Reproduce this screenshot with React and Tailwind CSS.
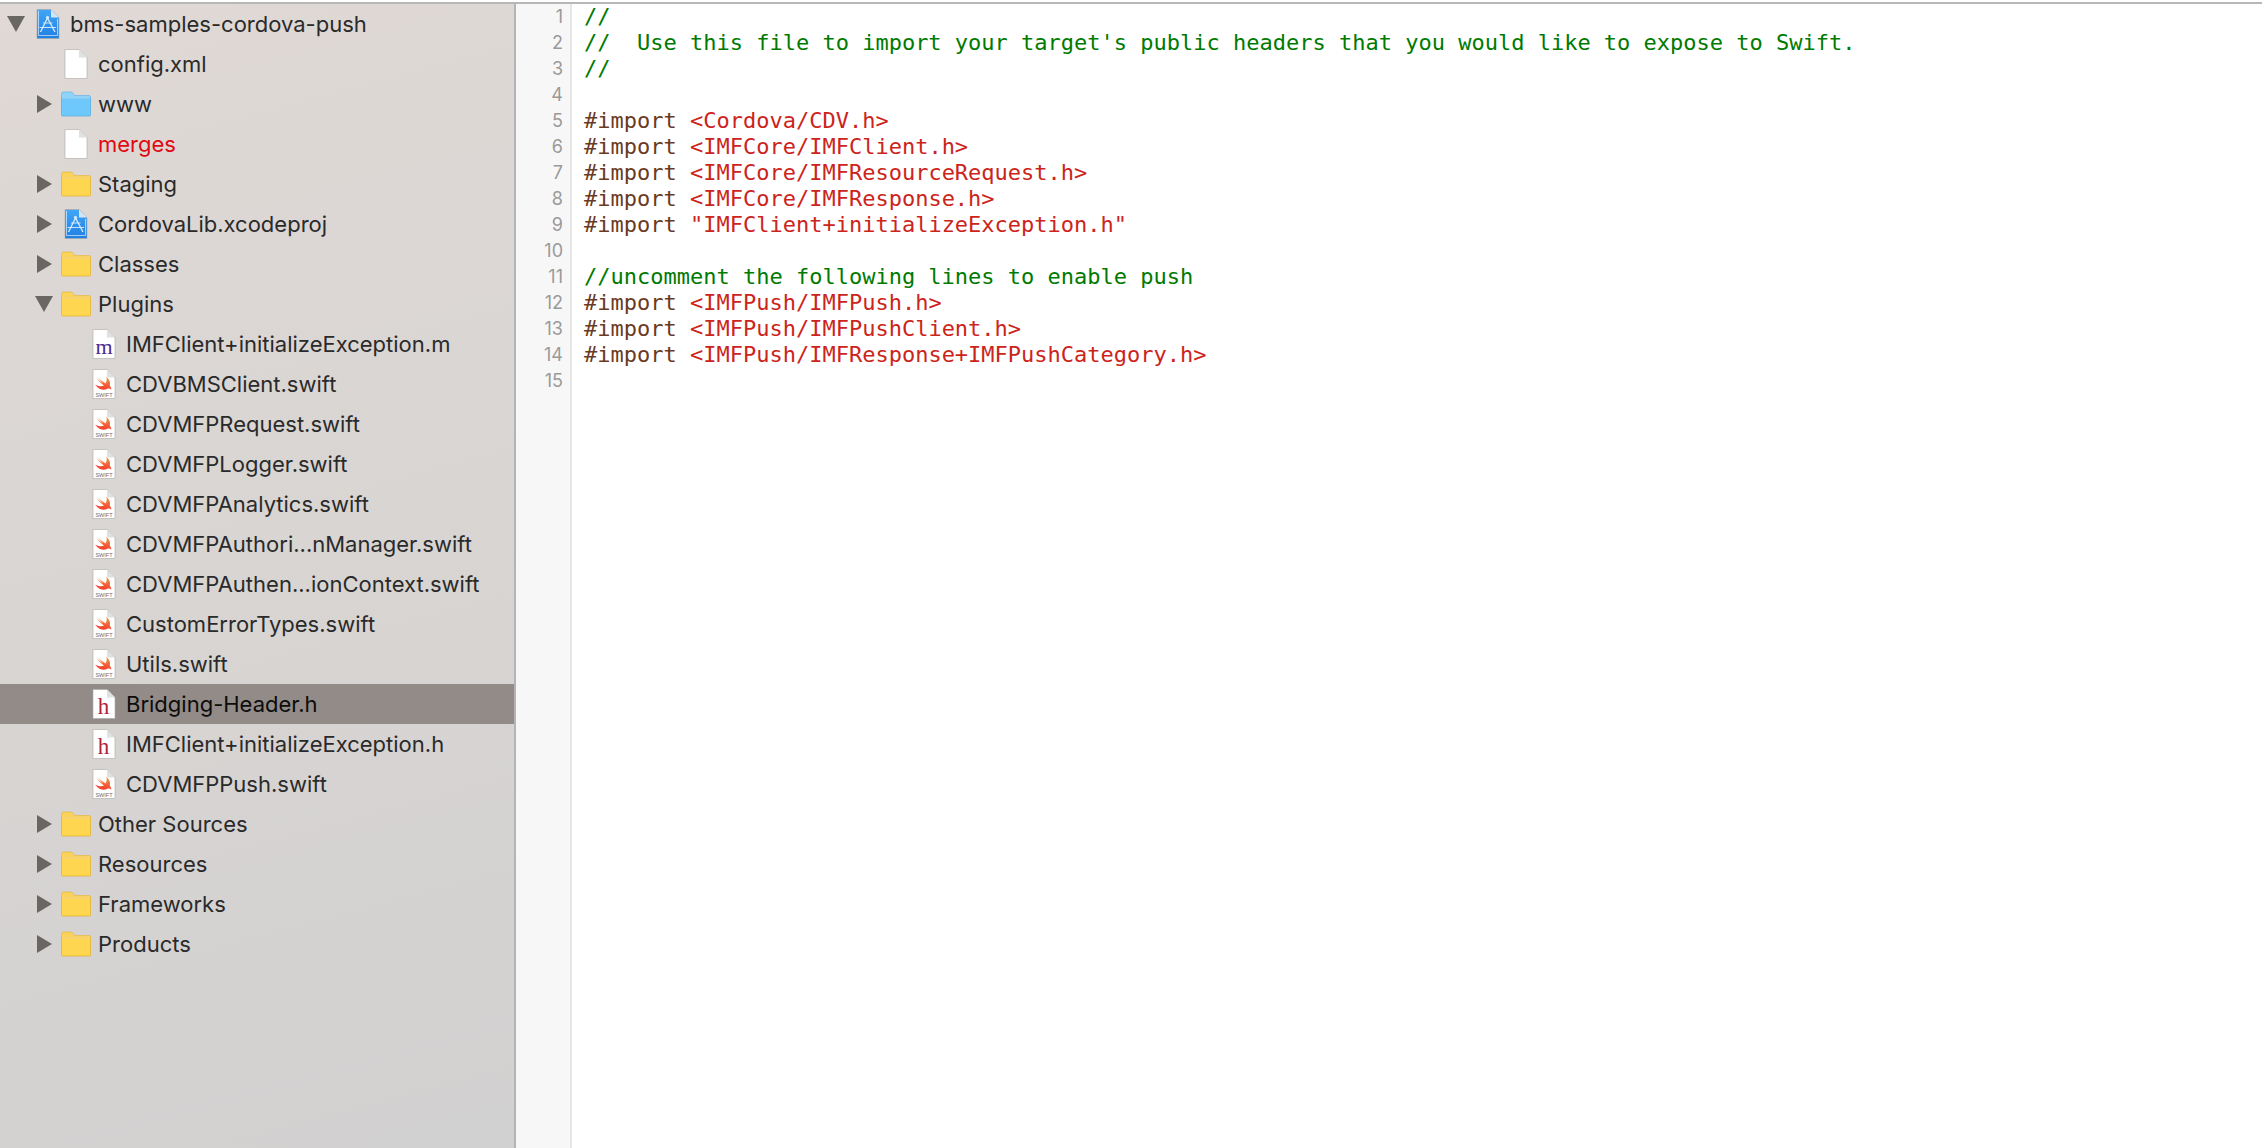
// Sidebar tree: level sets the indent, arrow is "open", "closed" or nothing
const tree = [
  { level: 0, arrow: "open", icon: "project", name: "bms-samples-cordova-push" },
  { level: 1, icon: "doc", name: "config.xml" },
  { level: 1, arrow: "closed", icon: "blueFolder", name: "www" },
  { level: 1, icon: "doc", name: "merges", red: true },
  { level: 1, arrow: "closed", icon: "folder", name: "Staging" },
  { level: 1, arrow: "closed", icon: "project", name: "CordovaLib.xcodeproj" },
  { level: 1, arrow: "closed", icon: "folder", name: "Classes" },
  { level: 1, arrow: "open", icon: "folder", name: "Plugins" },
  { level: 2, icon: "m", name: "IMFClient+initializeException.m" },
  { level: 2, icon: "swift", name: "CDVBMSClient.swift" },
  { level: 2, icon: "swift", name: "CDVMFPRequest.swift" },
  { level: 2, icon: "swift", name: "CDVMFPLogger.swift" },
  { level: 2, icon: "swift", name: "CDVMFPAnalytics.swift" },
  { level: 2, icon: "swift", name: "CDVMFPAuthori...nManager.swift" },
  { level: 2, icon: "swift", name: "CDVMFPAuthen...ionContext.swift" },
  { level: 2, icon: "swift", name: "CustomErrorTypes.swift" },
  { level: 2, icon: "swift", name: "Utils.swift" },
  { level: 2, icon: "h", name: "Bridging-Header.h", selected: true },
  { level: 2, icon: "h", name: "IMFClient+initializeException.h" },
  { level: 2, icon: "swift", name: "CDVMFPPush.swift" },
  { level: 1, arrow: "closed", icon: "folder", name: "Other Sources" },
  { level: 1, arrow: "closed", icon: "folder", name: "Resources" },
  { level: 1, arrow: "closed", icon: "folder", name: "Frameworks" },
  { level: 1, arrow: "closed", icon: "folder", name: "Products" },
];

const indents = ["pl-[7px]", "pl-[35px]", "pl-[63px]"];

const code = [
  [["c", "//"]],
  [["c", "//  Use this file to import your target's public headers that you would like to expose to Swift."]],
  [["c", "//"]],
  [],
  [["k", "#import "], ["s", "<Cordova/CDV.h>"]],
  [["k", "#import "], ["s", "<IMFCore/IMFClient.h>"]],
  [["k", "#import "], ["s", "<IMFCore/IMFResourceRequest.h>"]],
  [["k", "#import "], ["s", "<IMFCore/IMFResponse.h>"]],
  [["k", "#import "], ["s", '"IMFClient+initializeException.h"']],
  [],
  [["c", "//uncomment the following lines to enable push"]],
  [["k", "#import "], ["s", "<IMFPush/IMFPush.h>"]],
  [["k", "#import "], ["s", "<IMFPush/IMFPushClient.h>"]],
  [["k", "#import "], ["s", "<IMFPush/IMFResponse+IMFPushCategory.h>"]],
  [],
];

const tokenColors = {
  c: "text-[#007a00]",
  k: "text-[#6b3a22]",
  s: "text-[#cc241b]",
};

const Arrow = ({ type }) => (
  <svg width="18" height="18" viewBox="0 0 18 18" className="block">
    {type === "open" ? (
      <polygon points="0,1 18,1 9,17" fill="#6a6663" />
    ) : (
      <polygon points="2,0 17,9 2,18" fill="#6a6663" />
    )}
  </svg>
);

const Folder = ({ blue }) => {
  const body = blue ? "#6fc8fb" : "#ffd64f";
  const tab = blue ? "#8dd4fb" : "#fbd25a";
  const edge = blue ? "#5aaee0" : "#e3b437";
  return (
    <svg width="30" height="26" viewBox="0 0 30 26" className="block">
      <path d="M0.5 3 Q0.5 1 2.5 1 H10 Q11.5 1 12.5 3 L13.5 4.5 H28 Q29.5 4.5 29.5 6 V10 H0.5 Z" fill={tab} stroke={edge} strokeWidth="0.6" />
      <path d="M0.5 7 H29.5 V24 Q29.5 25 28.5 25 H1.5 Q0.5 25 0.5 24 Z" fill={body} stroke={edge} strokeWidth="0.8" />
      <rect x="1" y="6.5" width="28" height="1" fill="#ffffff" opacity="0.45" />
    </svg>
  );
};

const Doc = ({ children, fill = "#ffffff", fold = "#dfe0e0" }) => (
  <svg width="24" height="31" viewBox="0 0 24 31" className="block">
    <defs>
      <linearGradient id="swiftBird" x1="0.6" y1="0" x2="0.4" y2="1">
        <stop offset="0" stopColor="#f8913a" />
        <stop offset="1" stopColor="#ef3a2e" />
      </linearGradient>
      <linearGradient id="projectBlue" x1="0" y1="0" x2="0" y2="1">
        <stop offset="0" stopColor="#41a6f6" />
        <stop offset="1" stopColor="#1f7fe2" />
      </linearGradient>
    </defs>
    <path d="M1 0.5 H15 L23 8.5 V29.5 H1 Z" fill={fill} stroke="#a9a7a5" strokeWidth="0.6" />
    <path d="M15 0.5 V8.5 H23 Z" fill={fold} />
    {children}
  </svg>
);

const FileIcon = ({ icon }) => {
  if (icon === "folder") return <Folder />;
  if (icon === "blueFolder") return <Folder blue />;
  if (icon === "doc") return <Doc />;
  if (icon === "project")
    return (
      <Doc fill="url(#projectBlue)" fold="#cfe6fb">
        <g fill="none" stroke="#d8ecff" strokeWidth="0.9">
          <path d="M2.5 2 V26.5 H21.5 V10" opacity="0.8" />
          <path d="M11.5 9 L4.5 23 M11.5 9 L19 23" strokeWidth="1.3" />
          <path d="M3.5 18.5 H20 M7 14 H16.5" />
          <circle cx="11.5" cy="8.5" r="1.2" fill="#d8ecff" />
        </g>
      </Doc>
    );
  if (icon === "m")
    return (
      <Doc>
        <text x="12" y="25" textAnchor="middle" fontFamily="'Liberation Serif', serif" fontSize="22" fill="#4b2a8f">m</text>
      </Doc>
    );
  if (icon === "h")
    return (
      <Doc>
        <text x="11.5" y="25" textAnchor="middle" fontFamily="'Liberation Serif', serif" fontSize="23" fill="#ad1f35">h</text>
      </Doc>
    );
  return (
    <Doc>
      <svg x="3" y="7" width="18" height="16" viewBox="0 0 100 90">
        <path
          d="M62 4 C80 18 88 38 82 54 C90 64 92 72 90 78 C85 70 76 68 68 72 C55 80 35 80 18 68 C10 62 4 55 0 48 C15 58 35 62 50 54 C35 44 20 28 10 14 C22 26 38 38 46 42 C36 32 26 20 22 12 C34 24 52 38 60 42 C66 30 68 16 62 4 Z"
          fill="url(#swiftBird)"
        />
      </svg>
      <text x="12" y="28" textAnchor="middle" fontFamily="'Liberation Sans', sans-serif" fontSize="5.5" fill="#6b6b6b">SWIFT</text>
    </Doc>
  );
};

const TreeRow = ({ level, arrow, icon, name, red, selected }) => (
  <div className={`flex h-[40px] items-center ${indents[level]} ${selected ? "bg-[#928b88]" : ""}`}>
    <div className="flex w-[26px] shrink-0 items-center">{arrow && <Arrow type={arrow} />}</div>
    <div className="flex w-[30px] shrink-0 justify-center">
      <FileIcon icon={icon} />
    </div>
    <span
      className={`ml-[7px] whitespace-nowrap font-['Inter',sans-serif] text-[22px] ${
        red ? "text-[#df0a12]" : selected ? "text-[#0c0c0c]" : "text-[#2a2a2a]"
      }`}
    >
      {name}
    </span>
  </div>
);

const App = () => {
  return (
    <div className="flex h-[1148px] w-[2262px] flex-col overflow-hidden bg-white">
      {/* Linea superior de la ventana */}
      <div className="h-[4px] shrink-0 border-b-2 border-[#b7b7b7] bg-white" />

      <div className="flex min-h-0 flex-1">
        {/* Navegador de archivos */}
        <aside className="w-[516px] shrink-0 border-r-2 border-[#b4b4b4] bg-[linear-gradient(165deg,#e0d9d6_0%,#dad6d3_35%,#d2d1d1_100%)]">
          {tree.map((item) => (
            <TreeRow key={item.name} {...item} />
          ))}
        </aside>

        {/* Numeros de linea */}
        <div className="w-[56px] shrink-0 border-r-2 border-[#e6e6e6] bg-[#f7f7f7] pr-[7px] text-right font-['Inter',sans-serif] text-[18px] text-[#9a9a9a]">
          {code.map((_, i) => (
            <div key={i} className="h-[26px] leading-[26px]">
              {i + 1}
            </div>
          ))}
        </div>

        {/* Editor */}
        <main className="min-w-0 flex-1 pl-[12px] font-['DejaVu_Sans_Mono',monospace] text-[22px]">
          {code.map((line, i) => (
            <div key={i} className="h-[26px] whitespace-pre leading-[26px]">
              {line.map(([kind, text], j) => (
                <span key={j} className={tokenColors[kind]}>
                  {text}
                </span>
              ))}
            </div>
          ))}
        </main>
      </div>
    </div>
  );
};

export default App;
